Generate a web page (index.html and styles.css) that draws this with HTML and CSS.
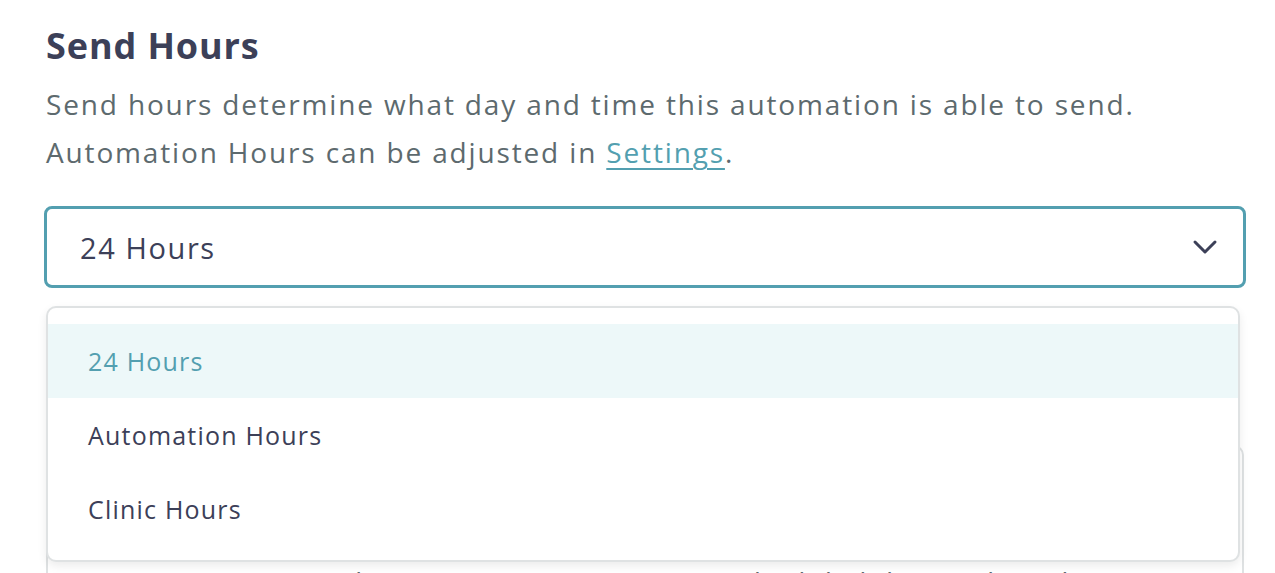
FILE: index.html
```html
<!DOCTYPE html>
<html lang="en">
<head>
    <meta charset="UTF-8">
    <meta name="viewport" content="width=device-width, initial-scale=1.0">
    <title>Send Hours</title>
    <link rel="stylesheet" href="styles.css">
</head>
<body>
    <div class="container">
        <section class="send-hours">
            <h2 class="section-title">Send Hours</h2>
            <p class="section-hint">
                Send hours determine what day and time this automation is able to send.<br>
                Automation Hours can be adjusted in <a href="#" class="hint-link">Settings</a>.
            </p>

            <div class="select-field">
                <button class="select-box" type="button">
                    <span class="select-value">24 Hours</span>
                    <svg class="select-chevron" width="26" height="16" viewBox="0 0 26 16" fill="none">
                        <path d="M3 3l10 10L23 3" stroke="currentColor" stroke-width="3" stroke-linecap="round" stroke-linejoin="round"/>
                    </svg>
                </button>

                <!-- open dropdown -->
                <ul class="select-menu">
                    <li class="menu-option selected">24 Hours</li>
                    <li class="menu-option">Automation Hours</li>
                    <li class="menu-option">Clinic Hours</li>
                </ul>
            </div>

            <div class="info-card">
                <p class="info-text">Messages only go out to appointments scheduled during these hours.</p>
            </div>
        </section>
    </div>
</body>
</html>
```

FILE: styles.css
```css
* { margin: 0; padding: 0; box-sizing: border-box; }
:root {
    --navy: #3c4058; --slate: #5d6a6e; --teal: #539fb0; --teal-light: #edf8f9;
    --border: #dfe2e3; --white: #ffffff;
}
body { background: var(--white); color: var(--navy); font-family: 'Open Sans', 'Lato', sans-serif; overflow: hidden; }
.container { width: 1202px; margin-left: 44px; padding-top: 22px; }
.section-title { font-size: 36px; font-weight: 700; color: var(--navy); letter-spacing: 0.9px; line-height: 48px; padding-left: 2px; }
.section-hint { margin-top: 10px; font-size: 28px; line-height: 48px; color: var(--slate); letter-spacing: 1.85px; padding-left: 2px; }
.hint-link { color: var(--teal); text-decoration: underline; text-underline-offset: 5px; text-decoration-thickness: 2px; }
.select-field { position: relative; margin-top: 30px; }
.select-box { width: 100%; height: 82px; display: flex; align-items: center; justify-content: space-between; padding: 0 25px 0 33px; background: var(--white); border: 3px solid var(--teal); border-radius: 8px; font-family: inherit; font-size: 29px; color: var(--navy); letter-spacing: 1.6px; cursor: pointer; }
.select-chevron { color: var(--navy); }
.select-menu { position: absolute; top: 100px; left: 2px; right: 6px; z-index: 5; list-style: none; background: var(--white); border: 2px solid var(--border); border-radius: 10px; padding: 16px 0 14px; box-shadow: 0 4px 10px rgba(0, 0, 0, 0.08); }
.menu-option { height: 74px; display: flex; align-items: center; padding-left: 40px; font-size: 25px; color: var(--navy); letter-spacing: 1.2px; }
.menu-option.selected { background: var(--teal-light); color: var(--teal); }
.info-card { margin-top: 157px; margin-left: 2px; margin-right: 2px; border: 2px solid var(--border); border-radius: 10px; padding: 116px 40px 40px 128px; }
.info-text { font-size: 27px; line-height: 40px; color: var(--slate); letter-spacing: 1.5px; }
```
